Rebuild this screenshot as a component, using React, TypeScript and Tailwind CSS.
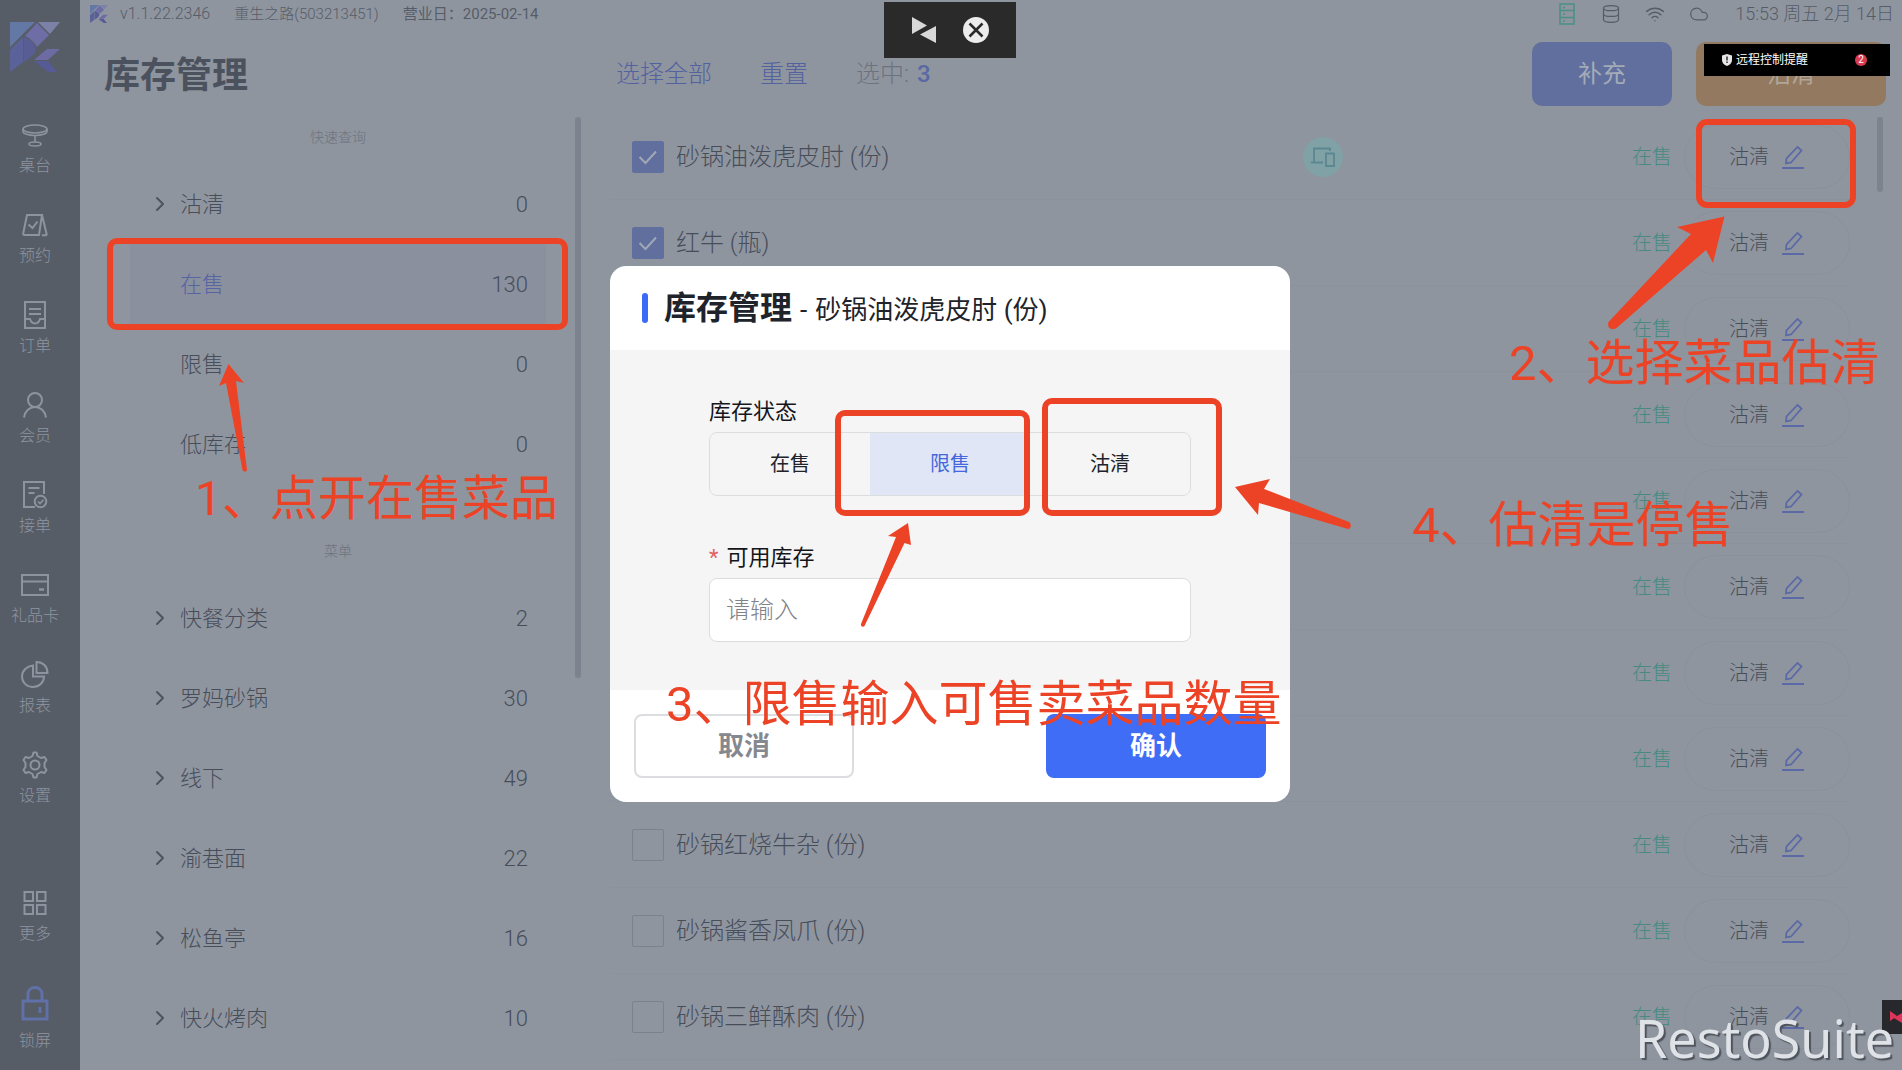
import { useState } from "react";
import type { ReactNode } from "react";
import { ChevronRight, Cloud, Database, Wifi } from "lucide-react";
import clsx from "clsx";

interface NavItem {
  label: string;
  icon: ReactNode;
}

interface Category {
  label: string;
  count: number;
  expandable?: boolean;
  active?: boolean;
}

interface Dish {
  id: number;
  name: string;
  checked?: boolean;
  multiDevice?: boolean;
}

const Glyph = ({ children }: { children: ReactNode }) => (
  <svg
    viewBox="0 0 32 32"
    className="h-8 w-8"
    fill="none"
    stroke="currentColor"
    strokeWidth="2"
    aria-hidden="true"
  >
    {children}
  </svg>
);

const NAV_ITEMS: NavItem[] = [
  {
    label: "桌台",
    icon: (
      <Glyph>
        <ellipse cx="16" cy="10" rx="12" ry="4" strokeWidth="1.6" />
        <path
          d="M4 10v2.500c0 2.200 5 4 12 4s12-1.800 12-4V10M16 16.500V23"
          strokeWidth="1.600"
        />
        <ellipse cx="16" cy="25" rx="6" ry="2" strokeWidth="1.6" />
      </Glyph>
    ),
  },
  {
    label: "预约",
    icon: (
      <Glyph>
        <path d="M8 6h15l-3 20H5.500c-1 0-1.500-.500-1.300-1.500zM23 6l4.600 19c.2.800-.200 1.300-1 1.300H23" />
        <path d="M9.500 15.500l4 3.500 5-6.500" />
      </Glyph>
    ),
  },
  {
    label: "订单",
    icon: (
      <Glyph>
        <path d="M6 3h20v26H6zM10 10h12M10 15h12M6 20h5c1 3 2.500 4.500 5 4.500s4-1.500 5-4.500h5" />
      </Glyph>
    ),
  },
  {
    label: "会员",
    icon: (
      <Glyph>
        <circle cx="16" cy="11" r="7" />
        <path d="M5 28.500c1-6.500 5.500-10.500 11-10.500s10 4 11 10.500" />
      </Glyph>
    ),
  },
  {
    label: "接单",
    icon: (
      <Glyph>
        <path d="M16 28H5V3h20v12M9.500 9h11M9.500 14h6" />
        <circle cx="21.500" cy="22.500" r="5.800" />
        <path d="M19 22.500l2 2 3.500-3.800" strokeWidth="1.600" />
      </Glyph>
    ),
  },
  {
    label: "礼品卡",
    icon: (
      <Glyph>
        <path d="M3 6h26v20H3zM3 12.500h26" />
        <path d="M20 20.500h5" strokeWidth="2.500" />
      </Glyph>
    ),
  },
  {
    label: "报表",
    icon: (
      <Glyph>
        <path d="M14 6.500c-6 .500-11 5-11 11 0 6.300 5 10.500 11 10.500 6 0 11-4.500 11-10.500H14z" />
        <path d="M17.500 3v11H28.500c0-6.500-4.500-11-11-11z" />
      </Glyph>
    ),
  },
  {
    label: "设置",
    icon: (
      <Glyph>
        <circle cx="16" cy="16" r="4.500" />
        <path
          d="M13.500 7l1-3.500h3l1 3.500 3.500 2 3.500-1 2 3-2 3v4l2 3-2 3-3.500-1-3.500 2-1 3.500h-3l-1-3.500-3.500-2-3.500 1-2-3 2-3v-4l-2-3 2-3 3.500 1z"
          strokeLinejoin="round"
        />
      </Glyph>
    ),
  },
];

const MORE_ITEM: NavItem = {
  label: "更多",
  icon: (
    <Glyph>
      <path d="M5.500 5h8.500v9H5.500zM18 5h8.500v9H18zM5.500 18h8.500v9H5.500zM18 18h8.500v9H18z" />
    </Glyph>
  ),
};

const QUICK_FILTERS: Category[] = [
  { label: "沽清", count: 0, expandable: true },
  { label: "在售", count: 130, active: true },
  { label: "限售", count: 0 },
  { label: "低库存", count: 0 },
];

const MENUS: Category[] = [
  { label: "快餐分类", count: 2, expandable: true },
  { label: "罗妈砂锅", count: 30, expandable: true },
  { label: "线下", count: 49, expandable: true },
  { label: "渝巷面", count: 22, expandable: true },
  { label: "松鱼亭", count: 16, expandable: true },
  { label: "快火烤肉", count: 10, expandable: true },
];

const DISHES: Dish[] = [
  { id: 1, name: "砂锅油泼虎皮肘 (份)", checked: true, multiDevice: true },
  { id: 2, name: "红牛 (瓶)", checked: true },
  { id: 3, name: "", checked: true },
  { id: 4, name: "" },
  { id: 5, name: "" },
  { id: 6, name: "" },
  { id: 7, name: "" },
  { id: 8, name: "" },
  { id: 9, name: "砂锅红烧牛杂 (份)" },
  { id: 10, name: "砂锅酱香凤爪 (份)" },
  { id: 11, name: "砂锅三鲜酥肉 (份)" },
];

const STOCK_STATES = ["在售", "限售", "沽清"];

const Logo = ({ className }: { className: string }) => (
  <svg viewBox="0 0 50 50" className={className} aria-hidden="true">
    <path d="M0 0h25L0 25z" fill="#6478a6" />
    <path d="M28 0h22L40 12z" fill="#7c81a8" />
    <path d="M27 1l12 12-12 12c-3-5-7-9-12-11z" fill="#6f6da6" />
    <path d="M13 15v25L0 50V28z" fill="#5a6299" />
    <path d="M14 15c6 2 11 7 12 12-1 6-6 9-12 13z" fill="#585e93" />
    <path d="M37 27h13L38 38H24z" fill="#6e6aa4" />
    <path d="M24 39h14l9 11h-9z" fill="#565b95" />
  </svg>
);

const NavButton = ({ item }: { item: NavItem }) => (
  <button
    type="button"
    className="flex h-[90px] w-full flex-col items-center gap-[3px] text-[#8d949f]"
  >
    {item.icon}
    <span className="text-base leading-6">{item.label}</span>
  </button>
);

const Sidebar = () => (
  <nav className="flex w-20 shrink-0 flex-col bg-[#575d67] pr-2.5 pt-[22px] font-light">
    <Logo className="mx-2.5 mb-[47px] h-[50px] w-[50px]" />
    {NAV_ITEMS.map((item) => (
      <NavButton key={item.label} item={item} />
    ))}
    <div className="mt-12">
      <NavButton item={MORE_ITEM} />
    </div>
    <button
      type="button"
      className="mt-2 flex flex-col items-center gap-2 text-[#8d949f]"
    >
      <svg
        viewBox="0 0 32 36"
        className="h-9 w-8 text-[#6070a8]"
        fill="none"
        stroke="currentColor"
        strokeWidth="3"
        aria-hidden="true"
      >
        <path d="M4 16h24v18H4zM9 16V9c0-4 3-6.500 7-6.500S23 5 23 9v7" />
        <path d="M21 22v6" />
      </svg>
      <span className="text-base leading-6">锁屏</span>
    </button>
  </nav>
);

const StatusBar = () => (
  <div className="flex h-7 items-center justify-between pl-2.5 pr-2 text-[#565d68]">
    <div className="flex items-center">
      <Logo className="mr-3 h-[18px] w-[18px]" />
      <span className="mr-6 text-base font-light">v1.1.22.2346</span>
      <span className="mr-6 text-[15px] font-light">重生之路(503213451)</span>
      <span className="text-[15px]">营业日：2025-02-14</span>
    </div>
    <div className="flex items-center">
      <svg
        viewBox="0 0 16 22"
        className="mr-[26px] h-[22px] w-4 text-[#4b9080]"
        fill="none"
        stroke="currentColor"
        strokeWidth="1.500"
        aria-hidden="true"
      >
        <path d="M1 1h14v20H1zM1 7.500h14M1 14.500h14M4 4.500h2M4 11h2M4 18h2" />
      </svg>
      <Database className="mr-6 h-5 w-5" strokeWidth={1.5} />
      <Wifi className="mr-6 h-5 w-5" strokeWidth={1.8} />
      <Cloud className="mr-[26px] h-5 w-5" strokeWidth={1.5} />
      <span className="text-lg font-light">15:53 周五 2月 14日</span>
    </div>
  </div>
);

const PageHeader = () => (
  <header className="flex items-center pb-2 pl-6 pr-4 pt-3.5">
    <h1 className="w-[512px] pt-1 text-4xl font-bold text-[#4b525e]">
      库存管理
    </h1>
    <button type="button" className="mr-12 text-2xl font-light text-[#53619f]">
      选择全部
    </button>
    <button type="button" className="mr-12 text-2xl font-light text-[#53619f]">
      重置
    </button>
    <p className="flex gap-2 text-2xl font-light text-[#6d737e]">
      选中: <span className="font-medium text-[#5a68a3]">3</span>
    </p>
    <div className="ml-auto flex gap-6">
      <button
        type="button"
        className="h-16 w-[140px] rounded-[10px] bg-[#606f9d] text-2xl text-[#a3abb8]"
      >
        补充
      </button>
      <button
        type="button"
        className="h-16 w-[190px] rounded-[10px] bg-[#93795f] text-2xl text-[#b0a598]"
      >
        沽清
      </button>
    </div>
  </header>
);

const CategoryGroup = ({
  title,
  items,
}: {
  title: string;
  items: Category[];
}) => (
  <section className="mb-[47px]">
    <h2 className="mb-[7px] text-center text-sm font-light leading-10 text-[#6d737e]">
      {title}
    </h2>
    <ul className="mx-[25px]">
      {items.map((item) => (
        <li key={item.label}>
          <button
            type="button"
            className={clsx(
              "flex h-20 w-full items-center px-[18px] text-[22px] font-light",
              item.active ? "bg-[#8a909e]" : ""
            )}
          >
            <span className="w-8 text-[#4d5460]">
              {item.expandable && (
                <ChevronRight className="h-6 w-6" strokeWidth={2} />
              )}
            </span>
            <span
              className={item.active ? "text-[#5664a2]" : "text-[#474e5a]"}
            >
              {item.label}
            </span>
            <span className="ml-auto text-[#474e5a]">{item.count}</span>
          </button>
        </li>
      ))}
    </ul>
  </section>
);

const DishRow = ({ dish }: { dish: Dish }) => (
  <li className="flex h-[86px] items-center border-b border-[#8c929c] pl-[22px]">
    <label className="flex items-center gap-3">
      <span className="relative flex h-8 w-8">
        <input
          type="checkbox"
          defaultChecked={dish.checked}
          aria-label={dish.name ? undefined : `菜品 ${dish.id}`}
          className="peer h-8 w-8 appearance-none rounded-xs border border-[#7b818d] checked:border-[#606f9d] checked:bg-[#606f9d]"
        />
        <svg
          viewBox="0 0 32 32"
          className="pointer-events-none absolute inset-0 hidden text-[#a0a8b6] peer-checked:block"
          fill="none"
          stroke="currentColor"
          strokeWidth="2"
          aria-hidden="true"
        >
          <path d="M7.500 16l6 6L24 10.500" />
        </svg>
      </span>
      <span className="text-2xl font-light text-[#474e5a]">{dish.name}</span>
    </label>
    <div className="ml-auto flex items-center">
      {dish.multiDevice && (
        <span className="mr-[289px] flex h-10 w-10 items-center justify-center rounded-full bg-[#80a1a5] text-[#5a8790]">
          <svg
            viewBox="0 0 28 24"
            className="h-6 w-7"
            fill="none"
            stroke="currentColor"
            strokeWidth="1.800"
            aria-hidden="true"
          >
            <path d="M14 17.500H2M5 17V3.500h16V6M17 8.500h8V21h-8z" />
          </svg>
        </span>
      )}
      <span className="text-xl font-light text-[#478a80]">在售</span>
      <button
        type="button"
        className="ml-3 flex h-16 w-[166px] items-center justify-center gap-3 rounded-full border border-[#8b909b] text-xl font-light text-[#474e5a]"
      >
        沽清
        <svg
          viewBox="0 0 24 24"
          className="h-6 w-6 text-[#5b6aa6]"
          fill="none"
          stroke="currentColor"
          strokeWidth="2"
          aria-hidden="true"
        >
          <path d="M1 23h22" />
          <path d="M16.500 2l4 3.500-10.500 12-5 1 .500-5z" strokeWidth="1.800" />
        </svg>
      </button>
    </div>
  </li>
);

const StockDialog = () => {
  const [state, setState] = useState("限售");

  return (
    <div className="absolute inset-0 flex items-center justify-center pb-0.5 pr-0.5">
      <div
        role="dialog"
        aria-labelledby="stock-title"
        className="w-[680px] overflow-hidden rounded-2xl bg-white"
      >
        <div className="flex h-[84px] items-center px-8">
          <span className="mr-4 h-[30px] w-1.5 rounded-full bg-[#3c6af6]" />
          <h2
            id="stock-title"
            className="flex items-baseline gap-2 text-[26px] text-[#20232a]"
          >
            <span className="text-[32px] font-bold">库存管理</span>
            <span className="flex gap-2">
              <span>-</span>
              <span>砂锅油泼虎皮肘 (份)</span>
            </span>
          </h2>
        </div>
        <form className="h-[340px] bg-[#f5f5f5] px-[99px] pt-[42px]">
          <fieldset>
            <legend className="text-[22px] leading-10 text-[#14161c]">
              库存状态
            </legend>
            <div className="flex h-16 overflow-hidden rounded-lg border border-[#dcdde0]">
              {STOCK_STATES.map((s) => (
                <button
                  key={s}
                  type="button"
                  aria-pressed={state === s}
                  onClick={() => setState(s)}
                  className={clsx(
                    "flex-1 text-xl",
                    state === s
                      ? "bg-[#e1e6f6] text-[#4468dc]"
                      : "text-[#20232a]"
                  )}
                >
                  {s}
                </button>
              ))}
            </div>
          </fieldset>
          <label
            htmlFor="stock-amount"
            className="mt-[42px] block text-[22px] leading-10 text-[#14161c]"
          >
            <span className="mr-2 text-[#e2615f]">*</span>
            可用库存
          </label>
          <input
            id="stock-amount"
            type="text"
            placeholder="请输入"
            className="h-16 w-full rounded-lg border border-[#dcdde0] bg-white px-4 text-2xl font-light placeholder:text-[#808287]"
          />
        </form>
        <div className="flex justify-between px-6 pb-6 pt-6">
          <button
            type="button"
            className="h-16 w-[220px] rounded-lg border-2 border-[#dcdde0] text-[26px] font-bold text-[#86888f]"
          >
            取消
          </button>
          <button
            type="button"
            className="h-16 w-[220px] rounded-lg bg-[#3f6df5] text-[26px] font-bold text-white"
          >
            确认
          </button>
        </div>
      </div>
    </div>
  );
};

const RemoteControls = () => (
  <>
    <div className="absolute left-[884px] top-0.5 flex h-14 w-[132px] items-center justify-center gap-[26px] bg-[#2a2a2a]">
      <svg viewBox="0 0 26 26" className="h-[26px] w-[26px]" aria-hidden="true">
        <path d="M1 0l15 8.500L1 17zM25 9v17L9 17.500z" fill="#d8d8d8" />
      </svg>
      <svg viewBox="0 0 26 26" className="h-[26px] w-[26px]" aria-hidden="true">
        <circle cx="13" cy="13" r="13" fill="#ececec" />
        <path
          d="M6.500 6.500l13 13M19.500 6.500l-13 13"
          stroke="#2a2a2a"
          strokeWidth="2.500"
        />
      </svg>
    </div>
    <div className="absolute right-3 top-11 flex h-8 w-[186px] items-center bg-black pl-[18px] pr-[23px] text-xs text-white">
      <svg viewBox="0 0 10 12" className="mr-1 h-3 w-2.5" aria-hidden="true">
        <path d="M5 0l5 1.500V6c0 3-2 5-5 6-3-1-5-3-5-6V1.500z" fill="#e6e6e6" />
        <path d="M5 2.500v4M5 7.500V9" stroke="#000" strokeWidth="1.200" />
      </svg>
      远程控制提醒
      <span className="ml-auto flex h-3 w-3 items-center justify-center rounded-full bg-[#d83a50] text-[10px] leading-3">
        2
      </span>
    </div>
    <div className="absolute bottom-9 right-0 flex h-[34px] w-5 items-center justify-end bg-[#26282b]">
      <svg viewBox="0 0 12 12" className="h-3 w-3" aria-hidden="true">
        <path d="M0 0l7 5-7 5zM12 2v10L4 7z" fill="#e0355a" />
      </svg>
    </div>
  </>
);

// Marcas rojas de la guía paso a paso
const Annotations = () => (
  <div className="pointer-events-none absolute inset-0 text-[49px] leading-none text-[#ec4326]">
    <svg className="absolute inset-0 h-full w-full" aria-hidden="true">
      <g fill="none" stroke="currentColor" strokeWidth="6">
        <rect x="110" y="241" width="455" height="86" rx="7" />
        <rect x="1699" y="122" width="154" height="83" rx="8" />
        <rect x="838" y="413" width="189" height="100" rx="7" />
        <rect x="1045" y="401" width="174" height="112" rx="7" />
      </g>
      <g fill="currentColor">
        <path d="M228.500 364L219 386l7-3 16.500 87c1 2 4 2 4.500 0l-11-89 8 2z" />
        <path d="M1724.500 216.500L1677 227l14 7-82.500 88c-2 6 3 9 8 6L1706 250l7 13z" />
        <path d="M908 523l-20 13 8 1-35 87c-.500 2.500 2 3.500 3.500 2l40-83 6.500 2z" />
        <path d="M1235 487l35-8-6 10 85 33c3 2 2 7-1 7l-89-26-1 12z" />
      </g>
    </svg>
    <p className="absolute left-[195px] top-[475px] text-5xl leading-none">
      1、点开在售菜品
    </p>
    <p className="absolute left-[1509px] top-[339px]">2、选择菜品估清</p>
    <p className="absolute left-[666px] top-[680px]">
      3、限售输入可售卖菜品数量
    </p>
    <p className="absolute left-[1412px] top-[501px]">4、估清是停售</p>
  </div>
);

export default function App() {
  return (
    <div className="relative flex h-screen overflow-hidden bg-[#8f959f] font-['Roboto','Noto_Sans_CJK_SC',sans-serif]">
      <Sidebar />
      <main className="flex min-w-0 flex-1 flex-col">
        <StatusBar />
        <PageHeader />
        <div className="flex min-h-0 flex-1 overflow-hidden">
          <aside className="ml-[25px] mt-[3px] flex w-[476px] shrink-0 gap-1">
            <div className="flex-1">
              <CategoryGroup title="快速查询" items={QUICK_FILTERS} />
              <CategoryGroup title="菜单" items={MENUS} />
            </div>
            <div className="h-[561px] w-1.5 rounded-full bg-[#7d838e]" />
          </aside>
          <ul className="ml-[29px] mr-[27px] min-w-0 flex-1">
            {DISHES.map((dish) => (
              <DishRow key={dish.id} dish={dish} />
            ))}
          </ul>
          <div className="mr-[19px] mt-[3px] h-[75px] w-1.5 rounded-full bg-[#7d838e]" />
        </div>
      </main>
      <StockDialog />
      <RemoteControls />
      <Annotations />
      <p className="absolute bottom-0 right-2 font-['Noto_Sans','Open_Sans',sans-serif] text-[52px] leading-[64px] text-[#dfe2e7] [text-shadow:2px_2px_1px_#4f545c]">
        RestoSuite
      </p>
    </div>
  );
}
